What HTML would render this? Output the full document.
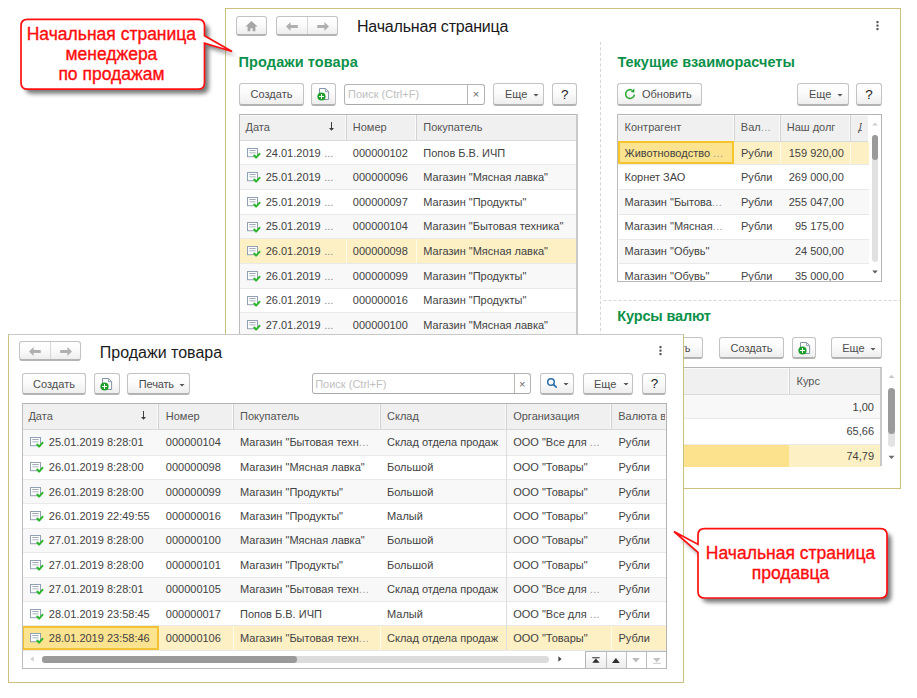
<!DOCTYPE html>
<html><head><meta charset="utf-8"><title>1C</title>
<style>
*{margin:0;padding:0}
html,body{width:917px;height:698px;overflow:hidden;background:#fff}
body{position:relative;font-family:"Liberation Sans", sans-serif}
.a{position:absolute}
.t{position:absolute;white-space:pre;line-height:20px;height:20px}
.btn{position:absolute;box-sizing:border-box;border:1px solid #c3c3c3;border-bottom:2px solid #b3b3b3;border-radius:3px;
 background:linear-gradient(#ffffff 0%,#fbfbfb 45%,#eeeeee 100%)}
</style></head>
<body>
<div class="a" style="left:225px;top:8px;width:676px;height:481px;box-sizing:border-box;border:1px solid #cdbf7c;background:#fff"></div>
<div class="btn" style="left:236.4px;top:16px;width:30.4px;height:20px;"></div>
<svg class="a" style="left:245.0px;top:20.5px" width="13" height="11" viewBox="0 0 13 11"><path d="M6.5 0 L12.6 5.6 H10.4 V10.2 H7.6 V7.2 H5.4 V10.2 H2.6 V5.6 H0.4 Z" fill="#a6a6a6"/></svg>
<div class="btn" style="left:276.4px;top:16px;width:61.5px;height:20px;"></div>
<div class="a" style="left:307.3px;top:17px;width:1px;height:17px;background:#d6d6d6"></div>
<svg class="a" style="left:286.35px;top:21.5px" width="12" height="9" viewBox="0 0 12 9"><path d="M0 4.5 L4.6 0 V3.1 H11.8 V5.9 H4.6 V9 Z" fill="#b0b0b0"/></svg>
<svg class="a" style="left:317.1px;top:21.5px" width="12" height="9" viewBox="0 0 12 9"><path d="M12 4.5 L7.4 0 V3.1 H0.2 V5.9 H7.4 V9 Z" fill="#b0b0b0"/></svg>
<div class="t" style="left:357.00px;top:16.56px;font-size:16px;color:#1a1a1a;font-weight:400;letter-spacing:-0.2px">Начальная страница</div>
<svg class="a" style="left:876.1px;top:20.8px" width="3" height="10" viewBox="0 0 3 10"><rect x="0.4" y="0" width="2.2" height="2.2" rx="0.6" fill="#595959"/><rect x="0.4" y="3.5" width="2.2" height="2.2" rx="0.6" fill="#595959"/><rect x="0.4" y="7" width="2.2" height="2.2" rx="0.6" fill="#595959"/></svg>
<svg class="a" style="left:0;top:0" width="917" height="698"><path d="M600.5 41.8 V488" stroke="#d6d6d6" stroke-width="1" stroke-dasharray="3.2 2.2"/><path d="M603.5 300.5 H900" stroke="#d8d8d8" stroke-width="1" stroke-dasharray="3.2 1.8"/></svg>
<div class="t" style="left:238.60px;top:52.18px;font-size:14.5px;color:#0b9149;font-weight:700;letter-spacing:0.1px">Продажи товара</div>
<div class="btn" style="left:239.4px;top:83px;width:64.2px;height:23px;"></div>
<div class="t" style="left:-28.50px;width:600px;text-align:center;top:84.49px;font-size:11px;color:#4d4d4d;font-weight:400;">Создать</div>
<div class="btn" style="left:311.3px;top:83px;width:25.1px;height:23px;"></div>
<svg class="a" style="left:317px;top:88px" width="14" height="14" viewBox="-2 0 14 14"><path d="M0.5 0.5 H6.6 L9.6 3.5 V11.5 H0.5 Z" fill="#fff" stroke="#8593a6" stroke-width="1"/><path d="M6.4 0.8 V3.7 H9.4" fill="none" stroke="#8593a6" stroke-width="0.9"/><circle cx="2.5" cy="8.5" r="4.1" fill="#1d9e2a"/><path d="M2.5 6 V11 M0 8.5 H5" stroke="#fff" stroke-width="1"/></svg>
<div class="a" style="left:344px;top:84px;width:141px;height:21px;box-sizing:border-box;border:1px solid #b4b4b4;border-bottom-color:#a8a8a8;border-radius:3px;background:#fff"></div>
<div class="a" style="left:467px;top:85px;width:1px;height:19px;background:#b8b8b8"></div>
<div class="t" style="left:348.00px;top:84.49px;font-size:11px;color:#c0c0c0;font-weight:400;">Поиск (Ctrl+F)</div>
<div class="t" style="left:176.00px;width:600px;text-align:center;top:84.49px;font-size:11px;color:#666;font-weight:400;">×</div>
<div class="btn" style="left:493.2px;top:83px;width:51.3px;height:23px;"></div>
<div class="t" style="left:505.00px;top:84.49px;font-size:11px;color:#4d4d4d;font-weight:400;">Еще</div>
<svg class="a" style="left:532.8px;top:93.3px" width="6" height="4"><path d="M0.5 1 L5.5 1 L3 3.5 Z" fill="#555"/></svg>
<div class="btn" style="left:552.1px;top:83px;width:25.1px;height:23px;"></div>
<div class="t" style="left:264.80px;width:600px;text-align:center;top:84.82px;font-size:13.5px;color:#1a1a1a;font-weight:400;">?</div>
<div class="a" style="left:239px;top:114px;width:339px;height:226px;background:#fff"></div>
<div class="a" style="left:240px;top:115px;width:337px;height:25.30000000000001px;background:#f0f0f0;border-top:1px solid #fafafa;box-sizing:border-box"></div>
<div class="a" style="left:240px;top:140.3px;width:337px;height:1px;background:#dadada"></div>
<div class="a" style="left:345px;top:115px;width:1px;height:25.30000000000001px;background:#fbfbfb"></div>
<div class="a" style="left:346px;top:115px;width:1px;height:25.30000000000001px;background:#d2d2d2"></div>
<div class="a" style="left:415px;top:115px;width:1px;height:25.30000000000001px;background:#fbfbfb"></div>
<div class="a" style="left:416px;top:115px;width:1px;height:25.30000000000001px;background:#d2d2d2"></div>
<div class="t" style="left:245.50px;top:116.99px;font-size:11px;color:#555555;font-weight:400;">Дата</div>
<svg class="a" style="left:329px;top:122px" width="5" height="9" viewBox="0 0 5 9"><rect x="2" y="0" width="1" height="7" fill="#3c3c3c"/><path d="M0 6 H5 L2.5 8.8 Z" fill="#3c3c3c"/></svg>
<div class="t" style="left:352.80px;top:116.99px;font-size:11px;color:#555555;font-weight:400;">Номер</div>
<div class="t" style="left:423.30px;top:116.99px;font-size:11px;color:#555555;font-weight:400;">Покупатель</div>
<div class="a" style="left:240px;top:141.3px;width:336px;height:23.0px;background:#ffffff"></div>
<div class="a" style="left:240px;top:164.3px;width:336px;height:1px;background:#e9e9e9"></div>
<svg class="a" style="left:246.5px;top:147.9px" width="14" height="12" viewBox="0 0 14 12"><rect x="0.5" y="0.5" width="10" height="8.2" fill="#fff" stroke="#92a0b3" stroke-width="1"/><rect x="2.3" y="2" width="6.4" height="1" fill="#a3abb6"/><rect x="2.3" y="4.2" width="6.4" height="1.2" fill="#b9c0ca"/><path d="M7.3 7.5 L9.1 9.6 L12.5 5.8" fill="none" stroke="#2db62d" stroke-width="2" stroke-linecap="round" stroke-linejoin="round"/></svg>
<div class="t" style="left:265.70px;top:142.69px;font-size:11px;color:#424242;font-weight:400;">24.01.2019</div>
<div class="t" style="left:324.20px;top:142.69px;font-size:11px;color:#8a8a8a;font-weight:400;">...</div>
<div class="t" style="left:352.80px;top:142.69px;font-size:11px;color:#424242;font-weight:400;">000000102</div>
<div class="t" style="left:423.30px;top:142.69px;font-size:11px;color:#424242;font-weight:400;">Попов Б.В. ИЧП</div>
<div class="a" style="left:240px;top:165.3px;width:336px;height:23.680000000000007px;background:#f8f8f8"></div>
<div class="a" style="left:240px;top:188.98000000000002px;width:336px;height:1px;background:#e9e9e9"></div>
<svg class="a" style="left:246.5px;top:172.24px" width="14" height="12" viewBox="0 0 14 12"><rect x="0.5" y="0.5" width="10" height="8.2" fill="#fff" stroke="#92a0b3" stroke-width="1"/><rect x="2.3" y="2" width="6.4" height="1" fill="#a3abb6"/><rect x="2.3" y="4.2" width="6.4" height="1.2" fill="#b9c0ca"/><path d="M7.3 7.5 L9.1 9.6 L12.5 5.8" fill="none" stroke="#2db62d" stroke-width="2" stroke-linecap="round" stroke-linejoin="round"/></svg>
<div class="t" style="left:265.70px;top:167.03px;font-size:11px;color:#424242;font-weight:400;">25.01.2019</div>
<div class="t" style="left:324.20px;top:167.03px;font-size:11px;color:#8a8a8a;font-weight:400;">...</div>
<div class="t" style="left:352.80px;top:167.03px;font-size:11px;color:#424242;font-weight:400;">000000096</div>
<div class="t" style="left:423.30px;top:167.03px;font-size:11px;color:#424242;font-weight:400;">Магазин "Мясная лавка"</div>
<div class="a" style="left:240px;top:189.98000000000002px;width:336px;height:23.680000000000007px;background:#ffffff"></div>
<div class="a" style="left:240px;top:213.66000000000003px;width:336px;height:1px;background:#e9e9e9"></div>
<svg class="a" style="left:246.5px;top:196.92000000000002px" width="14" height="12" viewBox="0 0 14 12"><rect x="0.5" y="0.5" width="10" height="8.2" fill="#fff" stroke="#92a0b3" stroke-width="1"/><rect x="2.3" y="2" width="6.4" height="1" fill="#a3abb6"/><rect x="2.3" y="4.2" width="6.4" height="1.2" fill="#b9c0ca"/><path d="M7.3 7.5 L9.1 9.6 L12.5 5.8" fill="none" stroke="#2db62d" stroke-width="2" stroke-linecap="round" stroke-linejoin="round"/></svg>
<div class="t" style="left:265.70px;top:191.71px;font-size:11px;color:#424242;font-weight:400;">25.01.2019</div>
<div class="t" style="left:324.20px;top:191.71px;font-size:11px;color:#8a8a8a;font-weight:400;">...</div>
<div class="t" style="left:352.80px;top:191.71px;font-size:11px;color:#424242;font-weight:400;">000000097</div>
<div class="t" style="left:423.30px;top:191.71px;font-size:11px;color:#424242;font-weight:400;">Магазин "Продукты"</div>
<div class="a" style="left:240px;top:214.66px;width:336px;height:23.680000000000007px;background:#f8f8f8"></div>
<div class="a" style="left:240px;top:238.34px;width:336px;height:1px;background:#e9e9e9"></div>
<svg class="a" style="left:246.5px;top:221.6px" width="14" height="12" viewBox="0 0 14 12"><rect x="0.5" y="0.5" width="10" height="8.2" fill="#fff" stroke="#92a0b3" stroke-width="1"/><rect x="2.3" y="2" width="6.4" height="1" fill="#a3abb6"/><rect x="2.3" y="4.2" width="6.4" height="1.2" fill="#b9c0ca"/><path d="M7.3 7.5 L9.1 9.6 L12.5 5.8" fill="none" stroke="#2db62d" stroke-width="2" stroke-linecap="round" stroke-linejoin="round"/></svg>
<div class="t" style="left:265.70px;top:216.39px;font-size:11px;color:#424242;font-weight:400;">25.01.2019</div>
<div class="t" style="left:324.20px;top:216.39px;font-size:11px;color:#8a8a8a;font-weight:400;">...</div>
<div class="t" style="left:352.80px;top:216.39px;font-size:11px;color:#424242;font-weight:400;">000000104</div>
<div class="t" style="left:423.30px;top:216.39px;font-size:11px;color:#424242;font-weight:400;">Магазин "Бытовая техника"</div>
<div class="a" style="left:240px;top:239.33999999999997px;width:336px;height:23.680000000000007px;background:#fdf0c4"></div>
<div class="a" style="left:240px;top:263.02px;width:336px;height:1px;background:#e9e9e9"></div>
<div class="a" style="left:346px;top:239.33999999999997px;width:1px;height:23.680000000000007px;background:#fffbe9"></div>
<div class="a" style="left:416px;top:239.33999999999997px;width:1px;height:23.680000000000007px;background:#fffbe9"></div>
<svg class="a" style="left:246.5px;top:246.27999999999997px" width="14" height="12" viewBox="0 0 14 12"><rect x="0.5" y="0.5" width="10" height="8.2" fill="#fff" stroke="#92a0b3" stroke-width="1"/><rect x="2.3" y="2" width="6.4" height="1" fill="#a3abb6"/><rect x="2.3" y="4.2" width="6.4" height="1.2" fill="#b9c0ca"/><path d="M7.3 7.5 L9.1 9.6 L12.5 5.8" fill="none" stroke="#2db62d" stroke-width="2" stroke-linecap="round" stroke-linejoin="round"/></svg>
<div class="t" style="left:265.70px;top:241.07px;font-size:11px;color:#424242;font-weight:400;">26.01.2019</div>
<div class="t" style="left:324.20px;top:241.07px;font-size:11px;color:#8a8a8a;font-weight:400;">...</div>
<div class="t" style="left:352.80px;top:241.07px;font-size:11px;color:#424242;font-weight:400;">000000098</div>
<div class="t" style="left:423.30px;top:241.07px;font-size:11px;color:#424242;font-weight:400;">Магазин "Мясная лавка"</div>
<div class="a" style="left:240px;top:264.02000000000004px;width:336px;height:23.680000000000007px;background:#f8f8f8"></div>
<div class="a" style="left:240px;top:287.70000000000005px;width:336px;height:1px;background:#e9e9e9"></div>
<svg class="a" style="left:246.5px;top:270.96000000000004px" width="14" height="12" viewBox="0 0 14 12"><rect x="0.5" y="0.5" width="10" height="8.2" fill="#fff" stroke="#92a0b3" stroke-width="1"/><rect x="2.3" y="2" width="6.4" height="1" fill="#a3abb6"/><rect x="2.3" y="4.2" width="6.4" height="1.2" fill="#b9c0ca"/><path d="M7.3 7.5 L9.1 9.6 L12.5 5.8" fill="none" stroke="#2db62d" stroke-width="2" stroke-linecap="round" stroke-linejoin="round"/></svg>
<div class="t" style="left:265.70px;top:265.75px;font-size:11px;color:#424242;font-weight:400;">26.01.2019</div>
<div class="t" style="left:324.20px;top:265.75px;font-size:11px;color:#8a8a8a;font-weight:400;">...</div>
<div class="t" style="left:352.80px;top:265.75px;font-size:11px;color:#424242;font-weight:400;">000000099</div>
<div class="t" style="left:423.30px;top:265.75px;font-size:11px;color:#424242;font-weight:400;">Магазин "Продукты"</div>
<div class="a" style="left:240px;top:288.7px;width:336px;height:23.680000000000007px;background:#ffffff"></div>
<div class="a" style="left:240px;top:312.38px;width:336px;height:1px;background:#e9e9e9"></div>
<svg class="a" style="left:246.5px;top:295.64px" width="14" height="12" viewBox="0 0 14 12"><rect x="0.5" y="0.5" width="10" height="8.2" fill="#fff" stroke="#92a0b3" stroke-width="1"/><rect x="2.3" y="2" width="6.4" height="1" fill="#a3abb6"/><rect x="2.3" y="4.2" width="6.4" height="1.2" fill="#b9c0ca"/><path d="M7.3 7.5 L9.1 9.6 L12.5 5.8" fill="none" stroke="#2db62d" stroke-width="2" stroke-linecap="round" stroke-linejoin="round"/></svg>
<div class="t" style="left:265.70px;top:290.43px;font-size:11px;color:#424242;font-weight:400;">26.01.2019</div>
<div class="t" style="left:324.20px;top:290.43px;font-size:11px;color:#8a8a8a;font-weight:400;">...</div>
<div class="t" style="left:352.80px;top:290.43px;font-size:11px;color:#424242;font-weight:400;">000000016</div>
<div class="t" style="left:423.30px;top:290.43px;font-size:11px;color:#424242;font-weight:400;">Магазин "Продукты"</div>
<div class="a" style="left:240px;top:313.38px;width:336px;height:23.680000000000007px;background:#f8f8f8"></div>
<div class="a" style="left:240px;top:337.06px;width:336px;height:1px;background:#e9e9e9"></div>
<svg class="a" style="left:246.5px;top:320.32000000000005px" width="14" height="12" viewBox="0 0 14 12"><rect x="0.5" y="0.5" width="10" height="8.2" fill="#fff" stroke="#92a0b3" stroke-width="1"/><rect x="2.3" y="2" width="6.4" height="1" fill="#a3abb6"/><rect x="2.3" y="4.2" width="6.4" height="1.2" fill="#b9c0ca"/><path d="M7.3 7.5 L9.1 9.6 L12.5 5.8" fill="none" stroke="#2db62d" stroke-width="2" stroke-linecap="round" stroke-linejoin="round"/></svg>
<div class="t" style="left:265.70px;top:315.11px;font-size:11px;color:#424242;font-weight:400;">27.01.2019</div>
<div class="t" style="left:324.20px;top:315.11px;font-size:11px;color:#8a8a8a;font-weight:400;">...</div>
<div class="t" style="left:352.80px;top:315.11px;font-size:11px;color:#424242;font-weight:400;">000000100</div>
<div class="t" style="left:423.30px;top:315.11px;font-size:11px;color:#424242;font-weight:400;">Магазин "Мясная лавка"</div>
<div class="a" style="left:239px;top:114px;width:339px;height:226px;box-sizing:border-box;border-left:1px solid #bcbcbc;border-top:1px solid #b3b3b3;border-right:2px solid #c9c9c9;"></div>
<div class="t" style="left:617.40px;top:52.18px;font-size:14.5px;color:#0b9149;font-weight:700;">Текущие взаиморасчеты</div>
<div class="btn" style="left:617.3px;top:83px;width:85.2px;height:23px;"></div>
<svg class="a" style="left:622.8px;top:87.4px" width="14" height="14" viewBox="0 0 14 14"><path d="M11.38 7.6 A4.4 4.4 0 1 1 9.0 3.1" fill="none" stroke="#35a83a" stroke-width="1.6"/><path d="M7.7 5.1 L11.3 1.5 L11.3 5.5 Z" fill="#1f9a2a"/></svg>
<div class="t" style="left:642.00px;top:84.49px;font-size:11px;color:#4d4d4d;font-weight:400;">Обновить</div>
<div class="btn" style="left:797.3px;top:83px;width:51.3px;height:23px;"></div>
<div class="t" style="left:809.00px;top:84.49px;font-size:11px;color:#4d4d4d;font-weight:400;">Еще</div>
<svg class="a" style="left:837.2px;top:93.3px" width="6" height="4"><path d="M0.5 1 L5.5 1 L3 3.5 Z" fill="#555"/></svg>
<div class="btn" style="left:856.1px;top:83px;width:25.9px;height:23px;"></div>
<div class="t" style="left:569.00px;width:600px;text-align:center;top:84.82px;font-size:13.5px;color:#1a1a1a;font-weight:400;">?</div>
<div class="a" style="left:617px;top:114.3px;width:264.70000000000005px;height:168.0px;background:#fff"></div>
<div class="a" style="left:618px;top:115.3px;width:262.70000000000005px;height:25.39999999999999px;background:#f0f0f0;border-top:1px solid #fafafa;box-sizing:border-box"></div>
<div class="a" style="left:618px;top:140.7px;width:262.70000000000005px;height:1px;background:#dadada"></div>
<div class="a" style="left:868.4px;top:115.3px;width:12.6px;height:166px;background:#fff"></div>
<div class="a" style="left:733px;top:115.3px;width:1px;height:25.39999999999999px;background:#fbfbfb"></div>
<div class="a" style="left:734px;top:115.3px;width:1px;height:25.39999999999999px;background:#d2d2d2"></div>
<div class="a" style="left:778.5px;top:115.3px;width:1px;height:25.39999999999999px;background:#fbfbfb"></div>
<div class="a" style="left:779.5px;top:115.3px;width:1px;height:25.39999999999999px;background:#d2d2d2"></div>
<div class="a" style="left:849px;top:115.3px;width:1px;height:25.39999999999999px;background:#fbfbfb"></div>
<div class="a" style="left:850px;top:115.3px;width:1px;height:25.39999999999999px;background:#d2d2d2"></div>
<div class="t" style="left:624.50px;top:117.49px;font-size:11px;color:#555555;font-weight:400;">Контрагент</div>
<div class="t" style="left:740.80px;top:117.49px;font-size:11px;color:#555555;font-weight:400;">Вал<span style="color:#9a9a9a;letter-spacing:0.4px">...</span></div>
<div class="t" style="left:786.70px;top:117.49px;font-size:11px;color:#555555;font-weight:400;">Наш долг</div>
<div class="a" style="left:851px;top:116px;width:11px;height:22px;overflow:hidden">
<div class="t" style="left:7px;top:1.49px;font-size:11px;color:#555555">Д</div>
</div>
<div class="a" style="left:618.5px;top:141.7px;width:250px;height:22.700000000000017px;background:#fdf0c4"></div>
<div class="a" style="left:618.5px;top:164.4px;width:250px;height:1px;background:#e9e9e9"></div>
<div class="a" style="left:618px;top:141.4px;width:115.8px;height:22.4px;box-sizing:border-box;border:2px solid #f4c52c;background:#fce38f"></div>
<div class="a" style="left:779.5px;top:141.7px;width:1px;height:22.700000000000017px;background:#fffbe9"></div>
<div class="a" style="left:850px;top:141.7px;width:1px;height:22.700000000000017px;background:#fffbe9"></div>
<div class="a" style="left:618.5px;top:141.7px;width:250px;height:22.700000000000017px;overflow:hidden">
<div class="t" style="left:6.0px;top:1.14px;font-size:11px;color:#424242">Животноводство <span style="color:#9a9a9a;letter-spacing:0.4px">...</span></div>
<div class="t" style="left:122.5px;top:1.14px;font-size:11px;color:#424242">Рубли</div>
<div class="t" style="right:24.700000000000045px;top:1.14px;font-size:11px;color:#424242">159 920,00</div>
</div>
<div class="a" style="left:618.5px;top:165.4px;width:250px;height:23.69999999999999px;background:#ffffff"></div>
<div class="a" style="left:618.5px;top:189.1px;width:250px;height:1px;background:#e9e9e9"></div>
<div class="a" style="left:618.5px;top:165.4px;width:250px;height:23.69999999999999px;overflow:hidden">
<div class="t" style="left:6.0px;top:1.64px;font-size:11px;color:#424242">Корнет ЗАО</div>
<div class="t" style="left:122.5px;top:1.64px;font-size:11px;color:#424242">Рубли</div>
<div class="t" style="right:24.700000000000045px;top:1.64px;font-size:11px;color:#424242">269 000,00</div>
</div>
<div class="a" style="left:618.5px;top:190.10000000000002px;width:250px;height:23.69999999999999px;background:#f8f8f8"></div>
<div class="a" style="left:618.5px;top:213.8px;width:250px;height:1px;background:#e9e9e9"></div>
<div class="a" style="left:618.5px;top:190.10000000000002px;width:250px;height:23.69999999999999px;overflow:hidden">
<div class="t" style="left:6.0px;top:1.64px;font-size:11px;color:#424242">Магазин "Бытова<span style="color:#9a9a9a;letter-spacing:0.4px">...</span></div>
<div class="t" style="left:122.5px;top:1.64px;font-size:11px;color:#424242">Рубли</div>
<div class="t" style="right:24.700000000000045px;top:1.64px;font-size:11px;color:#424242">255 047,00</div>
</div>
<div class="a" style="left:618.5px;top:214.8px;width:250px;height:23.69999999999999px;background:#ffffff"></div>
<div class="a" style="left:618.5px;top:238.5px;width:250px;height:1px;background:#e9e9e9"></div>
<div class="a" style="left:618.5px;top:214.8px;width:250px;height:23.69999999999999px;overflow:hidden">
<div class="t" style="left:6.0px;top:1.64px;font-size:11px;color:#424242">Магазин "Мясная<span style="color:#9a9a9a;letter-spacing:0.4px">...</span></div>
<div class="t" style="left:122.5px;top:1.64px;font-size:11px;color:#424242">Рубли</div>
<div class="t" style="right:24.700000000000045px;top:1.64px;font-size:11px;color:#424242">95 175,00</div>
</div>
<div class="a" style="left:618.5px;top:239.5px;width:250px;height:23.69999999999999px;background:#f8f8f8"></div>
<div class="a" style="left:618.5px;top:263.2px;width:250px;height:1px;background:#e9e9e9"></div>
<div class="a" style="left:618.5px;top:239.5px;width:250px;height:23.69999999999999px;overflow:hidden">
<div class="t" style="left:6.0px;top:1.64px;font-size:11px;color:#424242">Магазин "Обувь"</div>
<div class="t" style="left:122.5px;top:1.64px;font-size:11px;color:#424242"></div>
<div class="t" style="right:24.700000000000045px;top:1.64px;font-size:11px;color:#424242">24 500,00</div>
</div>
<div class="a" style="left:618.5px;top:264.2px;width:250px;height:17.100000000000023px;background:#ffffff"></div>
<div class="a" style="left:618.5px;top:264.2px;width:250px;height:17.100000000000023px;overflow:hidden">
<div class="t" style="left:6.0px;top:1.64px;font-size:11px;color:#424242">Магазин "Обувь"</div>
<div class="t" style="left:122.5px;top:1.64px;font-size:11px;color:#424242">Рубли</div>
<div class="t" style="right:24.700000000000045px;top:1.64px;font-size:11px;color:#424242">35 000,00</div>
</div>
<div class="a" style="left:617px;top:114.3px;width:265px;height:168.0px;box-sizing:border-box;border-left:1px solid #bcbcbc;border-top:1px solid #b3b3b3;border-bottom:1px solid #b9b9b9;"></div>
<div class="a" style="left:881px;top:114.3px;width:1px;height:168px;background:#b3b3b3"></div>
<svg class="a" style="left:871.8px;top:122.2px" width="6" height="4"><path d="M0.2 3.6 L5.8 3.6 L3 0.4 Z" fill="#cdcdcd"/></svg>
<div class="a" style="left:871.8px;top:134.5px;width:6.2px;height:127.5px;background:#e1e1e1;border-radius:3.1px"></div>
<div class="a" style="left:871.8px;top:134.5px;width:6.2px;height:25.8px;background:#9a9a9a;border-radius:3.1px"></div>
<svg class="a" style="left:871.8px;top:270.2px" width="6" height="4"><path d="M0.2 0.4 L5.8 0.4 L3 3.6 Z" fill="#5c5c5c"/></svg>
<div class="t" style="left:617.30px;top:306.08px;font-size:14.5px;color:#0b9149;font-weight:700;letter-spacing:-0.15px">Курсы валют</div>
<div class="btn" style="left:617px;top:336.9px;width:85.5px;height:22px;"></div>
<div class="t" style="left:640.80px;top:337.99px;font-size:11px;color:#4d4d4d;font-weight:400;">Обновить</div>
<div class="btn" style="left:719.4px;top:336.9px;width:64.2px;height:22px;"></div>
<div class="t" style="left:451.50px;width:600px;text-align:center;top:337.99px;font-size:11px;color:#4d4d4d;font-weight:400;">Создать</div>
<div class="btn" style="left:792.1px;top:336.9px;width:24.3px;height:22px;"></div>
<svg class="a" style="left:797.8px;top:342px" width="14" height="14" viewBox="-2 0 14 14"><path d="M0.5 0.5 H6.6 L9.6 3.5 V11.5 H0.5 Z" fill="#fff" stroke="#8593a6" stroke-width="1"/><path d="M6.4 0.8 V3.7 H9.4" fill="none" stroke="#8593a6" stroke-width="0.9"/><circle cx="2.5" cy="8.5" r="4.1" fill="#1d9e2a"/><path d="M2.5 6 V11 M0 8.5 H5" stroke="#fff" stroke-width="1"/></svg>
<div class="btn" style="left:830.6px;top:336.9px;width:51.1px;height:22px;"></div>
<div class="t" style="left:842.20px;top:337.99px;font-size:11px;color:#4d4d4d;font-weight:400;">Еще</div>
<svg class="a" style="left:869.5px;top:347px" width="6" height="4"><path d="M0.5 1 L5.5 1 L3 3.5 Z" fill="#555"/></svg>
<div class="a" style="left:617px;top:367.2px;width:264.5px;height:102.80000000000001px;background:#fff"></div>
<div class="a" style="left:618px;top:368.2px;width:262.5px;height:26.100000000000023px;background:#f0f0f0;border-top:1px solid #fafafa;box-sizing:border-box"></div>
<div class="a" style="left:618px;top:394.3px;width:262.5px;height:1px;background:#dadada"></div>
<div class="a" style="left:788px;top:368.2px;width:1px;height:26.100000000000023px;background:#fbfbfb"></div>
<div class="a" style="left:789px;top:368.2px;width:1px;height:26.100000000000023px;background:#d2d2d2"></div>
<div class="t" style="left:796.50px;top:371.19px;font-size:11px;color:#555555;font-weight:400;">Курс</div>
<div class="t" style="left:624.50px;top:371.19px;font-size:11px;color:#555555;font-weight:400;">Валюта</div>
<div class="a" style="left:618.5px;top:395.3px;width:262px;height:23.0px;background:#f8f8f8"></div>
<div class="a" style="left:618.5px;top:418.3px;width:262px;height:1px;background:#e9e9e9"></div>
<div class="t" style="right:43.00px;top:396.59px;font-size:11px;color:#424242;font-weight:400;">1,00</div>
<div class="a" style="left:618.5px;top:419.3px;width:262px;height:24.19999999999999px;background:#ffffff"></div>
<div class="a" style="left:618.5px;top:443.5px;width:262px;height:1px;background:#e9e9e9"></div>
<div class="t" style="right:43.00px;top:421.19px;font-size:11px;color:#424242;font-weight:400;">65,66</div>
<div class="a" style="left:618.5px;top:444.5px;width:262px;height:23.30000000000001px;background:#fdf0c4"></div>
<div class="a" style="left:618.5px;top:444.5px;width:170.5px;height:23.30000000000001px;background:#fde28d"></div>
<div class="t" style="right:43.00px;top:445.94px;font-size:11px;color:#424242;font-weight:400;">74,79</div>
<div class="a" style="left:617px;top:466.5px;width:265px;height:21px;background:#fff"></div>
<div class="a" style="left:617px;top:367.2px;width:264.5px;height:99.30000000000001px;box-sizing:border-box;border-left:1px solid #bcbcbc;border-top:1px solid #b3b3b3;border-right:2px solid #c9c9c9;"></div>
<svg class="a" style="left:888px;top:374px" width="7" height="5"><path d="M0.5 4 L6.5 4 L3.5 0.8 Z" fill="#c8c8c8"/></svg>
<div class="a" style="left:888px;top:387.5px;width:6.5px;height:59.5px;background:#e3e3e3;border-radius:3.5px"></div>
<div class="a" style="left:888px;top:387.5px;width:6.5px;height:46.5px;background:#9b9b9b;border-radius:3.5px"></div>
<svg class="a" style="left:888px;top:455px" width="7" height="5"><path d="M0.5 0.8 L6.5 0.8 L3.5 4 Z" fill="#6a6a6a"/></svg>
<div class="a" style="left:8px;top:334px;width:676px;height:349px;box-sizing:border-box;border:1px solid #cdbf7c;border-top-color:#c9c9c9;background:#fff"></div>
<div class="btn" style="left:19.4px;top:341.3px;width:61.9px;height:19.6px;"></div>
<div class="a" style="left:50.3px;top:342.3px;width:1px;height:16.6px;background:#d6d6d6"></div>
<svg class="a" style="left:29.349999999999994px;top:346.6px" width="12" height="9" viewBox="0 0 12 9"><path d="M0 4.5 L4.6 0 V3.1 H11.8 V5.9 H4.6 V9 Z" fill="#b0b0b0"/></svg>
<svg class="a" style="left:60.3px;top:346.6px" width="12" height="9" viewBox="0 0 12 9"><path d="M12 4.5 L7.4 0 V3.1 H0.2 V5.9 H7.4 V9 Z" fill="#b0b0b0"/></svg>
<div class="t" style="left:99.80px;top:342.76px;font-size:16px;color:#1a1a1a;font-weight:400;">Продажи товара</div>
<svg class="a" style="left:659.1px;top:346px" width="3" height="10" viewBox="0 0 3 10"><rect x="0.4" y="0" width="2.2" height="2.2" rx="0.6" fill="#595959"/><rect x="0.4" y="3.5" width="2.2" height="2.2" rx="0.6" fill="#595959"/><rect x="0.4" y="7" width="2.2" height="2.2" rx="0.6" fill="#595959"/></svg>
<div class="btn" style="left:21.7px;top:372.5px;width:64.7px;height:22.1px;"></div>
<div class="t" style="left:-246.00px;width:600px;text-align:center;top:373.99px;font-size:11px;color:#4d4d4d;font-weight:400;">Создать</div>
<div class="btn" style="left:94.2px;top:372.5px;width:25.4px;height:22.1px;"></div>
<svg class="a" style="left:99.9px;top:377.6px" width="14" height="14" viewBox="-2 0 14 14"><path d="M0.5 0.5 H6.6 L9.6 3.5 V11.5 H0.5 Z" fill="#fff" stroke="#8593a6" stroke-width="1"/><path d="M6.4 0.8 V3.7 H9.4" fill="none" stroke="#8593a6" stroke-width="0.9"/><circle cx="2.5" cy="8.5" r="4.1" fill="#1d9e2a"/><path d="M2.5 6 V11 M0 8.5 H5" stroke="#fff" stroke-width="1"/></svg>
<div class="btn" style="left:127.4px;top:372.5px;width:62.8px;height:22.1px;"></div>
<div class="t" style="left:138.80px;top:373.99px;font-size:11px;color:#4d4d4d;font-weight:400;letter-spacing:-0.15px">Печать</div>
<svg class="a" style="left:179.1px;top:382.8px" width="6" height="4"><path d="M0.5 1 L5.5 1 L3 3.5 Z" fill="#555"/></svg>
<div class="a" style="left:312.4px;top:373px;width:219px;height:21px;box-sizing:border-box;border:1px solid #b4b4b4;border-bottom-color:#a8a8a8;border-radius:3px;background:#fff"></div>
<div class="a" style="left:513.5px;top:374px;width:1px;height:19px;background:#b8b8b8"></div>
<div class="t" style="left:315.20px;top:373.99px;font-size:11px;color:#c0c0c0;font-weight:400;">Поиск (Ctrl+F)</div>
<div class="t" style="left:222.30px;width:600px;text-align:center;top:373.99px;font-size:11px;color:#666;font-weight:400;">×</div>
<div class="btn" style="left:539.6px;top:372.5px;width:34.9px;height:22.1px;"></div>
<svg class="a" style="left:546px;top:377.2px" width="12" height="12" viewBox="0 0 12 12"><circle cx="5" cy="5" r="3.3" fill="none" stroke="#2c6ea6" stroke-width="1.5"/><path d="M7.4 7.4 L10.2 10.2" stroke="#2c6ea6" stroke-width="1.7" stroke-linecap="round"/></svg>
<svg class="a" style="left:563.4px;top:382.3px" width="6" height="4"><path d="M0.5 1 L5.5 1 L3 3.5 Z" fill="#555"/></svg>
<div class="btn" style="left:582.7px;top:372.5px;width:50.8px;height:22.1px;"></div>
<div class="t" style="left:594.00px;top:373.99px;font-size:11px;color:#4d4d4d;font-weight:400;">Еще</div>
<svg class="a" style="left:622.6px;top:382.3px" width="6" height="4"><path d="M0.5 1 L5.5 1 L3 3.5 Z" fill="#555"/></svg>
<div class="btn" style="left:642px;top:372.5px;width:24.4px;height:22.1px;"></div>
<div class="t" style="left:354.60px;width:600px;text-align:center;top:374.32px;font-size:13.5px;color:#1a1a1a;font-weight:400;">?</div>
<div class="a" style="left:21.5px;top:403.2px;width:645.5px;height:266px;background:#fff"></div>
<div class="a" style="left:22.5px;top:404.2px;width:643px;height:24.8px;background:#f0f0f0"></div>
<div class="a" style="left:22.5px;top:429px;width:643px;height:1px;background:#dadada"></div>
<div class="a" style="left:157px;top:404.2px;width:1px;height:24.80000000000001px;background:#fbfbfb"></div>
<div class="a" style="left:158px;top:404.2px;width:1px;height:24.80000000000001px;background:#d2d2d2"></div>
<div class="a" style="left:232px;top:404.2px;width:1px;height:24.80000000000001px;background:#fbfbfb"></div>
<div class="a" style="left:233px;top:404.2px;width:1px;height:24.80000000000001px;background:#d2d2d2"></div>
<div class="a" style="left:379px;top:404.2px;width:1px;height:24.80000000000001px;background:#fbfbfb"></div>
<div class="a" style="left:380px;top:404.2px;width:1px;height:24.80000000000001px;background:#d2d2d2"></div>
<div class="a" style="left:505px;top:404.2px;width:1px;height:24.80000000000001px;background:#fbfbfb"></div>
<div class="a" style="left:506px;top:404.2px;width:1px;height:24.80000000000001px;background:#d2d2d2"></div>
<div class="a" style="left:610px;top:404.2px;width:1px;height:24.80000000000001px;background:#fbfbfb"></div>
<div class="a" style="left:611px;top:404.2px;width:1px;height:24.80000000000001px;background:#d2d2d2"></div>
<div class="t" style="left:28.40px;top:406.19px;font-size:11px;color:#555555;font-weight:400;">Дата</div>
<svg class="a" style="left:141px;top:411px" width="5" height="9" viewBox="0 0 5 9"><rect x="2" y="0" width="1" height="7" fill="#3c3c3c"/><path d="M0 6 H5 L2.5 8.8 Z" fill="#3c3c3c"/></svg>
<div class="t" style="left:165.80px;top:406.19px;font-size:11px;color:#555555;font-weight:400;">Номер</div>
<div class="t" style="left:240.00px;top:406.19px;font-size:11px;color:#555555;font-weight:400;">Покупатель</div>
<div class="t" style="left:387.00px;top:406.19px;font-size:11px;color:#555555;font-weight:400;">Склад</div>
<div class="t" style="left:513.20px;top:406.19px;font-size:11px;color:#555555;font-weight:400;">Организация</div>
<div class="a" style="left:612px;top:404.5px;width:53px;height:24px;overflow:hidden">
<div class="t" style="left:6.2px;top:1.69px;font-size:11px;color:#555555">Валюта в</div>
</div>
<div class="a" style="left:22.5px;top:430.2px;width:643px;height:24.400000000000034px;background:#f8f8f8"></div>
<div class="a" style="left:22.5px;top:454.6px;width:643px;height:1px;background:#e9e9e9"></div>
<svg class="a" style="left:29.5px;top:437.29999999999995px" width="14" height="12" viewBox="0 0 14 12"><rect x="0.5" y="0.5" width="10" height="8.2" fill="#fff" stroke="#92a0b3" stroke-width="1"/><rect x="2.3" y="2" width="6.4" height="1" fill="#a3abb6"/><rect x="2.3" y="4.2" width="6.4" height="1.2" fill="#b9c0ca"/><path d="M7.3 7.5 L9.1 9.6 L12.5 5.8" fill="none" stroke="#2db62d" stroke-width="2" stroke-linecap="round" stroke-linejoin="round"/></svg>
<div class="t" style="left:48.80px;top:432.19px;font-size:11px;color:#424242;font-weight:400;">25.01.2019 8:28:01</div>
<div class="t" style="left:165.80px;top:432.19px;font-size:11px;color:#424242;font-weight:400;">000000104</div>
<div class="t" style="left:240.00px;top:432.19px;font-size:11px;color:#424242;font-weight:400;">Магазин "Бытовая техн<span style="color:#9a9a9a;letter-spacing:0.4px">...</span></div>
<div class="t" style="left:387.00px;top:432.19px;font-size:11px;color:#424242;font-weight:400;">Склад отдела продаж</div>
<div class="t" style="left:513.20px;top:432.19px;font-size:11px;color:#424242;font-weight:400;">ООО "Все для <span style="color:#9a9a9a;letter-spacing:0.4px">...</span></div>
<div class="t" style="left:618.50px;top:432.19px;font-size:11px;color:#424242;font-weight:400;">Рубли</div>
<div class="a" style="left:22.5px;top:455.6px;width:643px;height:23.410000000000025px;background:#ffffff"></div>
<div class="a" style="left:22.5px;top:479.01000000000005px;width:643px;height:1px;background:#e9e9e9"></div>
<svg class="a" style="left:29.5px;top:462.20500000000004px" width="14" height="12" viewBox="0 0 14 12"><rect x="0.5" y="0.5" width="10" height="8.2" fill="#fff" stroke="#92a0b3" stroke-width="1"/><rect x="2.3" y="2" width="6.4" height="1" fill="#a3abb6"/><rect x="2.3" y="4.2" width="6.4" height="1.2" fill="#b9c0ca"/><path d="M7.3 7.5 L9.1 9.6 L12.5 5.8" fill="none" stroke="#2db62d" stroke-width="2" stroke-linecap="round" stroke-linejoin="round"/></svg>
<div class="t" style="left:48.80px;top:457.09px;font-size:11px;color:#424242;font-weight:400;">26.01.2019 8:28:00</div>
<div class="t" style="left:165.80px;top:457.09px;font-size:11px;color:#424242;font-weight:400;">000000098</div>
<div class="t" style="left:240.00px;top:457.09px;font-size:11px;color:#424242;font-weight:400;">Магазин "Мясная лавка"</div>
<div class="t" style="left:387.00px;top:457.09px;font-size:11px;color:#424242;font-weight:400;">Большой</div>
<div class="t" style="left:513.20px;top:457.09px;font-size:11px;color:#424242;font-weight:400;">ООО "Товары"</div>
<div class="t" style="left:618.50px;top:457.09px;font-size:11px;color:#424242;font-weight:400;">Рубли</div>
<div class="a" style="left:22.5px;top:480.01px;width:643px;height:23.410000000000025px;background:#f8f8f8"></div>
<div class="a" style="left:22.5px;top:503.42px;width:643px;height:1px;background:#e9e9e9"></div>
<svg class="a" style="left:29.5px;top:486.615px" width="14" height="12" viewBox="0 0 14 12"><rect x="0.5" y="0.5" width="10" height="8.2" fill="#fff" stroke="#92a0b3" stroke-width="1"/><rect x="2.3" y="2" width="6.4" height="1" fill="#a3abb6"/><rect x="2.3" y="4.2" width="6.4" height="1.2" fill="#b9c0ca"/><path d="M7.3 7.5 L9.1 9.6 L12.5 5.8" fill="none" stroke="#2db62d" stroke-width="2" stroke-linecap="round" stroke-linejoin="round"/></svg>
<div class="t" style="left:48.80px;top:481.50px;font-size:11px;color:#424242;font-weight:400;">26.01.2019 8:28:00</div>
<div class="t" style="left:165.80px;top:481.50px;font-size:11px;color:#424242;font-weight:400;">000000099</div>
<div class="t" style="left:240.00px;top:481.50px;font-size:11px;color:#424242;font-weight:400;">Магазин "Продукты"</div>
<div class="t" style="left:387.00px;top:481.50px;font-size:11px;color:#424242;font-weight:400;">Большой</div>
<div class="t" style="left:513.20px;top:481.50px;font-size:11px;color:#424242;font-weight:400;">ООО "Товары"</div>
<div class="t" style="left:618.50px;top:481.50px;font-size:11px;color:#424242;font-weight:400;">Рубли</div>
<div class="a" style="left:22.5px;top:504.42px;width:643px;height:23.410000000000025px;background:#ffffff"></div>
<div class="a" style="left:22.5px;top:527.83px;width:643px;height:1px;background:#e9e9e9"></div>
<svg class="a" style="left:29.5px;top:511.025px" width="14" height="12" viewBox="0 0 14 12"><rect x="0.5" y="0.5" width="10" height="8.2" fill="#fff" stroke="#92a0b3" stroke-width="1"/><rect x="2.3" y="2" width="6.4" height="1" fill="#a3abb6"/><rect x="2.3" y="4.2" width="6.4" height="1.2" fill="#b9c0ca"/><path d="M7.3 7.5 L9.1 9.6 L12.5 5.8" fill="none" stroke="#2db62d" stroke-width="2" stroke-linecap="round" stroke-linejoin="round"/></svg>
<div class="t" style="left:48.80px;top:505.91px;font-size:11px;color:#424242;font-weight:400;">26.01.2019 22:49:55</div>
<div class="t" style="left:165.80px;top:505.91px;font-size:11px;color:#424242;font-weight:400;">000000016</div>
<div class="t" style="left:240.00px;top:505.91px;font-size:11px;color:#424242;font-weight:400;">Магазин "Продукты"</div>
<div class="t" style="left:387.00px;top:505.91px;font-size:11px;color:#424242;font-weight:400;">Малый</div>
<div class="t" style="left:513.20px;top:505.91px;font-size:11px;color:#424242;font-weight:400;">ООО "Товары"</div>
<div class="t" style="left:618.50px;top:505.91px;font-size:11px;color:#424242;font-weight:400;">Рубли</div>
<div class="a" style="left:22.5px;top:528.83px;width:643px;height:23.409999999999968px;background:#f8f8f8"></div>
<div class="a" style="left:22.5px;top:552.24px;width:643px;height:1px;background:#e9e9e9"></div>
<svg class="a" style="left:29.5px;top:535.4350000000001px" width="14" height="12" viewBox="0 0 14 12"><rect x="0.5" y="0.5" width="10" height="8.2" fill="#fff" stroke="#92a0b3" stroke-width="1"/><rect x="2.3" y="2" width="6.4" height="1" fill="#a3abb6"/><rect x="2.3" y="4.2" width="6.4" height="1.2" fill="#b9c0ca"/><path d="M7.3 7.5 L9.1 9.6 L12.5 5.8" fill="none" stroke="#2db62d" stroke-width="2" stroke-linecap="round" stroke-linejoin="round"/></svg>
<div class="t" style="left:48.80px;top:530.32px;font-size:11px;color:#424242;font-weight:400;">27.01.2019 8:28:00</div>
<div class="t" style="left:165.80px;top:530.32px;font-size:11px;color:#424242;font-weight:400;">000000100</div>
<div class="t" style="left:240.00px;top:530.32px;font-size:11px;color:#424242;font-weight:400;">Магазин "Мясная лавка"</div>
<div class="t" style="left:387.00px;top:530.32px;font-size:11px;color:#424242;font-weight:400;">Большой</div>
<div class="t" style="left:513.20px;top:530.32px;font-size:11px;color:#424242;font-weight:400;">ООО "Товары"</div>
<div class="t" style="left:618.50px;top:530.32px;font-size:11px;color:#424242;font-weight:400;">Рубли</div>
<div class="a" style="left:22.5px;top:553.24px;width:643px;height:23.409999999999968px;background:#ffffff"></div>
<div class="a" style="left:22.5px;top:576.65px;width:643px;height:1px;background:#e9e9e9"></div>
<svg class="a" style="left:29.5px;top:559.8449999999999px" width="14" height="12" viewBox="0 0 14 12"><rect x="0.5" y="0.5" width="10" height="8.2" fill="#fff" stroke="#92a0b3" stroke-width="1"/><rect x="2.3" y="2" width="6.4" height="1" fill="#a3abb6"/><rect x="2.3" y="4.2" width="6.4" height="1.2" fill="#b9c0ca"/><path d="M7.3 7.5 L9.1 9.6 L12.5 5.8" fill="none" stroke="#2db62d" stroke-width="2" stroke-linecap="round" stroke-linejoin="round"/></svg>
<div class="t" style="left:48.80px;top:554.73px;font-size:11px;color:#424242;font-weight:400;">27.01.2019 8:28:00</div>
<div class="t" style="left:165.80px;top:554.73px;font-size:11px;color:#424242;font-weight:400;">000000101</div>
<div class="t" style="left:240.00px;top:554.73px;font-size:11px;color:#424242;font-weight:400;">Магазин "Продукты"</div>
<div class="t" style="left:387.00px;top:554.73px;font-size:11px;color:#424242;font-weight:400;">Большой</div>
<div class="t" style="left:513.20px;top:554.73px;font-size:11px;color:#424242;font-weight:400;">ООО "Товары"</div>
<div class="t" style="left:618.50px;top:554.73px;font-size:11px;color:#424242;font-weight:400;">Рубли</div>
<div class="a" style="left:22.5px;top:577.6500000000001px;width:643px;height:23.409999999999968px;background:#f8f8f8"></div>
<div class="a" style="left:22.5px;top:601.0600000000001px;width:643px;height:1px;background:#e9e9e9"></div>
<svg class="a" style="left:29.5px;top:584.255px" width="14" height="12" viewBox="0 0 14 12"><rect x="0.5" y="0.5" width="10" height="8.2" fill="#fff" stroke="#92a0b3" stroke-width="1"/><rect x="2.3" y="2" width="6.4" height="1" fill="#a3abb6"/><rect x="2.3" y="4.2" width="6.4" height="1.2" fill="#b9c0ca"/><path d="M7.3 7.5 L9.1 9.6 L12.5 5.8" fill="none" stroke="#2db62d" stroke-width="2" stroke-linecap="round" stroke-linejoin="round"/></svg>
<div class="t" style="left:48.80px;top:579.14px;font-size:11px;color:#424242;font-weight:400;">27.01.2019 8:28:01</div>
<div class="t" style="left:165.80px;top:579.14px;font-size:11px;color:#424242;font-weight:400;">000000105</div>
<div class="t" style="left:240.00px;top:579.14px;font-size:11px;color:#424242;font-weight:400;">Магазин "Бытовая техн<span style="color:#9a9a9a;letter-spacing:0.4px">...</span></div>
<div class="t" style="left:387.00px;top:579.14px;font-size:11px;color:#424242;font-weight:400;">Склад отдела продаж</div>
<div class="t" style="left:513.20px;top:579.14px;font-size:11px;color:#424242;font-weight:400;">ООО "Все для <span style="color:#9a9a9a;letter-spacing:0.4px">...</span></div>
<div class="t" style="left:618.50px;top:579.14px;font-size:11px;color:#424242;font-weight:400;">Рубли</div>
<div class="a" style="left:22.5px;top:602.0600000000001px;width:643px;height:23.409999999999968px;background:#ffffff"></div>
<div class="a" style="left:22.5px;top:625.47px;width:643px;height:1px;background:#e9e9e9"></div>
<svg class="a" style="left:29.5px;top:608.6650000000001px" width="14" height="12" viewBox="0 0 14 12"><rect x="0.5" y="0.5" width="10" height="8.2" fill="#fff" stroke="#92a0b3" stroke-width="1"/><rect x="2.3" y="2" width="6.4" height="1" fill="#a3abb6"/><rect x="2.3" y="4.2" width="6.4" height="1.2" fill="#b9c0ca"/><path d="M7.3 7.5 L9.1 9.6 L12.5 5.8" fill="none" stroke="#2db62d" stroke-width="2" stroke-linecap="round" stroke-linejoin="round"/></svg>
<div class="t" style="left:48.80px;top:603.55px;font-size:11px;color:#424242;font-weight:400;">28.01.2019 23:58:45</div>
<div class="t" style="left:165.80px;top:603.55px;font-size:11px;color:#424242;font-weight:400;">000000017</div>
<div class="t" style="left:240.00px;top:603.55px;font-size:11px;color:#424242;font-weight:400;">Попов Б.В. ИЧП</div>
<div class="t" style="left:387.00px;top:603.55px;font-size:11px;color:#424242;font-weight:400;">Малый</div>
<div class="t" style="left:513.20px;top:603.55px;font-size:11px;color:#424242;font-weight:400;">ООО "Все для <span style="color:#9a9a9a;letter-spacing:0.4px">...</span></div>
<div class="t" style="left:618.50px;top:603.55px;font-size:11px;color:#424242;font-weight:400;">Рубли</div>
<div class="a" style="left:22.5px;top:626.47px;width:643px;height:23.409999999999968px;background:#fdf0c4"></div>
<div class="a" style="left:22.5px;top:649.88px;width:643px;height:1px;background:#e9e9e9"></div>
<div class="a" style="left:22px;top:625.97px;width:136.5px;height:23.909999999999968px;box-sizing:border-box;border:2px solid #f3c232;background:#fce38f"></div>
<div class="a" style="left:233px;top:626.47px;width:1px;height:23.409999999999968px;background:#fffbe9"></div>
<div class="a" style="left:380px;top:626.47px;width:1px;height:23.409999999999968px;background:#fffbe9"></div>
<div class="a" style="left:611px;top:626.47px;width:1px;height:23.409999999999968px;background:#fffbe9"></div>
<svg class="a" style="left:29.5px;top:633.0749999999999px" width="14" height="12" viewBox="0 0 14 12"><rect x="0.5" y="0.5" width="10" height="8.2" fill="#fff" stroke="#92a0b3" stroke-width="1"/><rect x="2.3" y="2" width="6.4" height="1" fill="#a3abb6"/><rect x="2.3" y="4.2" width="6.4" height="1.2" fill="#b9c0ca"/><path d="M7.3 7.5 L9.1 9.6 L12.5 5.8" fill="none" stroke="#2db62d" stroke-width="2" stroke-linecap="round" stroke-linejoin="round"/></svg>
<div class="t" style="left:48.80px;top:627.96px;font-size:11px;color:#424242;font-weight:400;">28.01.2019 23:58:46</div>
<div class="t" style="left:165.80px;top:627.96px;font-size:11px;color:#424242;font-weight:400;">000000106</div>
<div class="t" style="left:240.00px;top:627.96px;font-size:11px;color:#424242;font-weight:400;">Магазин "Бытовая техн<span style="color:#9a9a9a;letter-spacing:0.4px">...</span></div>
<div class="t" style="left:387.00px;top:627.96px;font-size:11px;color:#424242;font-weight:400;">Склад отдела продаж</div>
<div class="t" style="left:513.20px;top:627.96px;font-size:11px;color:#424242;font-weight:400;">ООО "Товары"</div>
<div class="t" style="left:618.50px;top:627.96px;font-size:11px;color:#424242;font-weight:400;">Рубли</div>
<div class="a" style="left:506px;top:430px;width:1px;height:220px;background:#dedede"></div>
<div class="a" style="left:22.5px;top:651px;width:643px;height:17px;background:#fff"></div>
<svg class="a" style="left:30px;top:656.3px" width="4" height="6"><path d="M3.6 0.2 L3.6 5.8 L0.4 3 Z" fill="#cfcfcf"/></svg>
<div class="a" style="left:41.9px;top:656px;width:507.4px;height:6.6px;background:#dcdcdc;border-radius:3.3px"></div>
<div class="a" style="left:41.9px;top:656px;width:255.1px;height:6.6px;background:#9a9a9a;border-radius:3.3px"></div>
<svg class="a" style="left:557.5px;top:656.3px" width="4" height="6"><path d="M0.4 0.2 L0.4 5.8 L3.6 3 Z" fill="#444"/></svg>
<div class="a" style="left:585.4px;top:651.4px;width:40.5px;height:17.6px;background:linear-gradient(#ffffff,#ececec)"></div>
<div class="a" style="left:585.4px;top:651.4px;width:81.6px;height:17.6px;box-sizing:border-box;border-left:1px solid #b4b4b4;border-top:1px solid #b9b9b9"></div>
<div class="a" style="left:605.7px;top:652.4px;width:1px;height:16.6px;background:#bdbdbd"></div>
<div class="a" style="left:625.9px;top:652.4px;width:1px;height:16.6px;background:#bdbdbd"></div>
<div class="a" style="left:646.4px;top:652.4px;width:1px;height:16.6px;background:#bdbdbd"></div>
<div class="a" style="left:21.5px;top:403.2px;width:645.5px;height:266.00000000000006px;box-sizing:border-box;border-left:1px solid #bcbcbc;border-top:1px solid #b3b3b3;border-bottom:1px solid #b9b9b9;"></div>
<div class="a" style="left:666px;top:403.2px;width:1px;height:266px;background:#b4b4b4"></div>
<svg class="a" style="left:591.5px;top:657px" width="8" height="6"><path d="M0.2 0.3 H7.6 V1.3 H0.2 Z M3.9 1.6 L7.6 5.8 H0.2 Z" fill="#2e2e2e"/></svg>
<svg class="a" style="left:611.8px;top:658px" width="8" height="5"><path d="M3.9 0.1 L7.8 4.9 H0 Z" fill="#2e2e2e"/></svg>
<svg class="a" style="left:632px;top:658.4px" width="8" height="5"><path d="M3.9 4.6 L7.8 0 H0 Z" fill="#bdbdbd"/></svg>
<svg class="a" style="left:652.5px;top:657.8px" width="8" height="6"><path d="M3.8 4.2 L7.6 0 H0 Z M0.2 4.8 H7.6 V5.8 H0.2 Z" fill="#c2c2c2"/></svg>
<svg class="a" style="left:0;top:0" width="917" height="698"><defs><filter id="sh" x="-20%" y="-20%" width="140%" height="140%"><feGaussianBlur stdDeviation="2.1"/></filter></defs><path d="M27.5 19.4 H198.0 Q204.5 19.4 204.5 25.9 V35.8 L232 51.5 L204.5 43.2 V82.7 Q204.5 89.2 198.0 89.2 H27.5 Q21 89.2 21 82.7 V25.9 Q21 19.4 27.5 19.4 Z" fill="#6a6a6a" opacity="0.9" transform="translate(4.3,4.6)" filter="url(#sh)"/><path d="M27.5 19.4 H198.0 Q204.5 19.4 204.5 25.9 V35.8 L232 51.5 L204.5 43.2 V82.7 Q204.5 89.2 198.0 89.2 H27.5 Q21 89.2 21 82.7 V25.9 Q21 19.4 27.5 19.4 Z" fill="#fff" stroke="#ff1010" stroke-width="1.7"/></svg>
<div class="t" style="left:-188.60px;width:600px;text-align:center;top:23.94px;font-size:17.5px;color:#ff0d0d;font-weight:400;-webkit-text-stroke:0.35px #ff0d0d">Начальная страница</div>
<div class="t" style="left:-188.60px;width:600px;text-align:center;top:43.94px;font-size:17.5px;color:#ff0d0d;font-weight:400;-webkit-text-stroke:0.35px #ff0d0d">менеджера</div>
<div class="t" style="left:-188.60px;width:600px;text-align:center;top:63.94px;font-size:17.5px;color:#ff0d0d;font-weight:400;-webkit-text-stroke:0.35px #ff0d0d">по продажам</div>
<svg class="a" style="left:0;top:0" width="917" height="698"><defs><filter id="sh2" x="-20%" y="-20%" width="140%" height="140%"><feGaussianBlur stdDeviation="2.1"/></filter></defs><path d="M704.5 528.6 H880.5 Q887 528.6 887 535.1 V591.5 Q887 598 880.5 598 H704.5 Q698 598 698 591.5 V552.3 L674 531.5 L698 544.4 V535.1 Q698 528.6 704.5 528.6 Z" fill="#6a6a6a" opacity="0.9" transform="translate(4.3,4.6)" filter="url(#sh2)"/><path d="M704.5 528.6 H880.5 Q887 528.6 887 535.1 V591.5 Q887 598 880.5 598 H704.5 Q698 598 698 591.5 V552.3 L674 531.5 L698 544.4 V535.1 Q698 528.6 704.5 528.6 Z" fill="#fff" stroke="#ff1010" stroke-width="1.7"/></svg>
<div class="t" style="left:490.50px;width:600px;text-align:center;top:543.34px;font-size:17.5px;color:#ff0d0d;font-weight:400;-webkit-text-stroke:0.35px #ff0d0d">Начальная страница</div>
<div class="t" style="left:490.50px;width:600px;text-align:center;top:563.24px;font-size:17.5px;color:#ff0d0d;font-weight:400;-webkit-text-stroke:0.35px #ff0d0d">продавца</div>
</body></html>
